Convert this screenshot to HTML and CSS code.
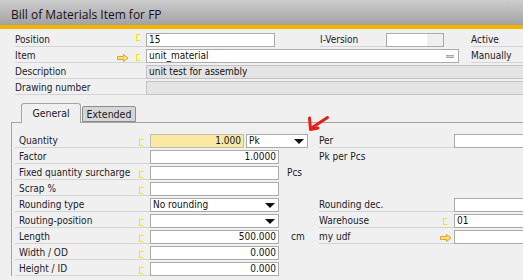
FILE: index.html
```html
<!DOCTYPE html>
<html lang="en">
<head>
    <meta charset="UTF-8">
    <title>Bill of Materials Item for FP</title>
    <link rel="stylesheet" href="styles.css">
</head>
<body>
    <div class="window">
        <div class="titlebar">Bill of Materials Item for FP</div>
        <div class="accent"></div>

        <div class="header">
            <div class="row">
                <div class="lbl lbl-head"><span class="text">Position</span><span class="mark mark-top"></span></div>
                <div class="fld w-pos">15</div>
                <div class="lbl lbl-iver">I-Version</div>
                <div class="fld w-iver"></div>
                <div class="lbl lbl-side lbl-active">Active</div>
            </div>
            <div class="row">
                <div class="lbl lbl-head"><span class="text">Item</span><span class="link"><svg width="12" height="8" viewBox="0 0 12 8"><polygon points="0.5,2.5 6.5,2.5 6.5,0.5 11,4 6.5,7.5 6.5,5.5 0.5,5.5" fill="#fbe07a" stroke="#d7a632" stroke-width="1"/></svg></span><span class="mark"></span></div>
                <div class="fld w-item">unit_material<span class="lookup"></span></div>
                <div class="lbl lbl-side lbl-manual">Manually</div>
            </div>
            <div class="row">
                <div class="lbl lbl-head"><span class="text">Description</span></div>
                <div class="fld fld-ro w-wide">unit test for assembly</div>
            </div>
            <div class="row">
                <div class="lbl lbl-head"><span class="text">Drawing number</span></div>
                <div class="fld fld-ro w-wide"></div>
            </div>
        </div>

        <div class="tabs">
            <div class="tab tab-active">General</div>
            <div class="tab">Extended</div>
        </div>

        <div class="panel">
            <div class="row">
                <div class="lbl lbl-body"><span class="text">Quantity</span><span class="mark"></span></div>
                <div class="fld fld-hl num w-qty">1.000</div>
                <div class="fld dd w-uom">Pk<span class="caret"></span></div>
                <div class="gap-per"></div>
                <div class="lbl lbl-right"><span class="text">Per</span></div>
                <div class="fld w-right"></div>
            </div>
            <div class="row">
                <div class="lbl lbl-body"><span class="text">Factor</span></div>
                <div class="fld num w-field">1.0000</div>
                <div class="unit"></div>
                <div class="plain">Pk per Pcs</div>
            </div>
            <div class="row">
                <div class="lbl lbl-body"><span class="text">Fixed quantity surcharge</span><span class="mark"></span></div>
                <div class="fld w-field"></div>
                <div class="unit">Pcs</div>
            </div>
            <div class="row">
                <div class="lbl lbl-body"><span class="text">Scrap %</span><span class="mark"></span></div>
                <div class="fld w-field"></div>
            </div>
            <div class="row">
                <div class="lbl lbl-body"><span class="text">Rounding type</span></div>
                <div class="fld dd w-field">No rounding<span class="caret"></span></div>
                <div class="unit"></div>
                <div class="lbl lbl-right"><span class="text">Rounding dec.</span></div>
                <div class="fld w-right"></div>
            </div>
            <div class="row">
                <div class="lbl lbl-body"><span class="text">Routing-position</span><span class="mark"></span></div>
                <div class="fld dd w-field"><span></span><span class="caret"></span></div>
                <div class="unit"></div>
                <div class="lbl lbl-right"><span class="text">Warehouse</span><span class="mark mark-wh"></span></div>
                <div class="fld w-right">01</div>
            </div>
            <div class="row">
                <div class="lbl lbl-body"><span class="text">Length</span><span class="mark"></span></div>
                <div class="fld num w-field">500.000</div>
                <div class="unit unit-cm">cm</div>
                <div class="lbl lbl-right lbl-udf"><span class="text">my udf</span><span class="link"><svg width="12" height="8" viewBox="0 0 12 8"><polygon points="0.5,2.5 6.5,2.5 6.5,0.5 11,4 6.5,7.5 6.5,5.5 0.5,5.5" fill="#fbe07a" stroke="#d7a632" stroke-width="1"/></svg></span></div>
                <div class="fld w-right"></div>
            </div>
            <div class="row">
                <div class="lbl lbl-body"><span class="text">Width / OD</span><span class="mark"></span></div>
                <div class="fld num w-field">0.000</div>
            </div>
            <div class="row">
                <div class="lbl lbl-body"><span class="text">Height / ID</span><span class="mark"></span></div>
                <div class="fld num w-field">0.000</div>
            </div>
        </div>

        <!-- hand-drawn annotation pointing at the UoM dropdown -->
        <svg class="scribble" width="26" height="20" viewBox="0 0 26 20">
            <path d="M3.5 4 L4.5 15.5 L12 14" fill="none" stroke="#e3211b" stroke-width="3" stroke-linecap="round" stroke-linejoin="round"/>
            <path d="M5.5 14 L21.5 3.5" fill="none" stroke="#e3211b" stroke-width="3" stroke-linecap="round"/>
        </svg>
    </div>
</body>
</html>
```

FILE: styles.css
```css
* { box-sizing: border-box; }

body {
    margin: 0;
    background: #f0f0f0;
    font-family: "DejaVu Sans Condensed", "DejaVu Sans", sans-serif;
    font-stretch: condensed;
    font-size: 10px;
    color: #1a1a2a;
}

.window {
    width: 523px;
    height: 280px;
    overflow: hidden;
    position: relative;
}

.titlebar {
    height: 25px;
    padding: 4px 0 0 11px;
    line-height: 21px;
    background: linear-gradient(#cdcdcd, #a2a2a2);
    font-family: "Open Sans", sans-serif;
    font-stretch: normal;
    font-size: 12px;
    color: #161020;
}

.accent {
    height: 4px;
    background: #f4b400;
}

.header {
    padding: 4px 0 0 15px;
}

.row {
    display: flex;
    height: 14px;
    margin-bottom: 2px;
}

/* labels */
.lbl {
    display: flex;
    align-items: center;
    flex-shrink: 0;
    height: 14px;
    border-bottom: 1px solid #d4d4d4;
    white-space: nowrap;
}

.lbl .text { flex: 1; }

.lbl-head { width: 131px; padding-right: 6px; }
.lbl-iver { width: 66px; margin-left: 45px; }
.lbl-side { width: 60px; }
.lbl-active { margin-left: 27px; }
.lbl-manual { margin-left: 12px; }

.lbl-body { width: 135px; padding-left: 4px; padding-right: 7px; }
.lbl-right { width: 135px; padding-right: 7px; }
.lbl-udf { padding-right: 2px; }

.plain {
    line-height: 14px;
    white-space: nowrap;
}

/* yellow "C" markers and link arrows */
.mark {
    align-self: flex-start;
    width: 4px;
    height: 7px;
    margin-top: 5px;
    border: 1px solid #f3e600;
    border-right: 0;
}

.mark-top { margin-top: 1px; }
.mark-wh { margin-top: 4px; }

.link {
    align-self: flex-start;
    display: flex;
    margin-top: 5px;
    margin-right: 7px;
}

.lbl-udf .link { margin-top: 4px; margin-right: 0; }

/* fields */
.fld {
    flex-shrink: 0;
    height: 14px;
    padding: 0 2px;
    border: 1px solid #ababab;
    background: #fff;
    line-height: 12px;
    white-space: nowrap;
    overflow: hidden;
    color: #111;
}

.fld-ro {
    background: #e4e4e4;
    border-color: #c2c2c2;
}

.fld-hl { background: #fbe9a2; border-color: #bdbdbd; }

.num { text-align: right; }

.w-pos { width: 129px; }
.w-iver { width: 58px; background: linear-gradient(90deg, #fff 72%, #efefef 72%); }
.w-item { width: 313px; display: flex; align-items: center; justify-content: space-between; padding-right: 4px; }
.w-wide { width: 400px; }
.w-qty { width: 94px; }
.w-uom { width: 62px; margin-left: 2px; }
.w-field { width: 129px; }
.w-right { width: 90px; }

.lookup {
    width: 8px;
    height: 3px;
    border-top: 1px solid #a9a9a9;
    border-bottom: 1px solid #a9a9a9;
    background: #d6d6d6;
}

.dd {
    display: flex;
    align-items: center;
    justify-content: space-between;
    padding-right: 3px;
}

.caret {
    width: 0;
    height: 0;
    border-left: 5px solid transparent;
    border-right: 5px solid transparent;
    border-top: 5px solid #111;
}

.gap-per { width: 11px; flex-shrink: 0; }

.unit {
    width: 40px;
    flex-shrink: 0;
    padding-left: 8px;
    line-height: 14px;
}

.unit-cm { padding-left: 12px; }

/* tabs */
.tabs {
    display: flex;
    align-items: flex-end;
    margin-left: 11px;
    padding: 6px 0 0 10px;
}

.tab {
    width: 54px;
    height: 16px;
    margin-left: 1px;
    border: 1px solid #8c8c8c;
    border-radius: 2px 2px 0 0;
    background: #d6d6d6;
    text-align: center;
    line-height: 14px;
    font-size: 10.5px;
}

.tab-active {
    position: relative;
    z-index: 1;
    width: 60px;
    height: 20px;
    margin-left: 0;
    margin-bottom: -1px;
    border-color: #a5a5a5;
    border-bottom: 0;
    border-radius: 3px 3px 0 0;
    background: #f0f0f0;
    line-height: 18px;
}

.panel {
    margin-left: 11px;
    padding: 11px 0 0 3px;
    border-top: 1px solid #a5a5a5;
    border-left: 1px solid #a5a5a5;
}

.scribble {
    position: absolute;
    left: 306px;
    top: 114px;
}
```
